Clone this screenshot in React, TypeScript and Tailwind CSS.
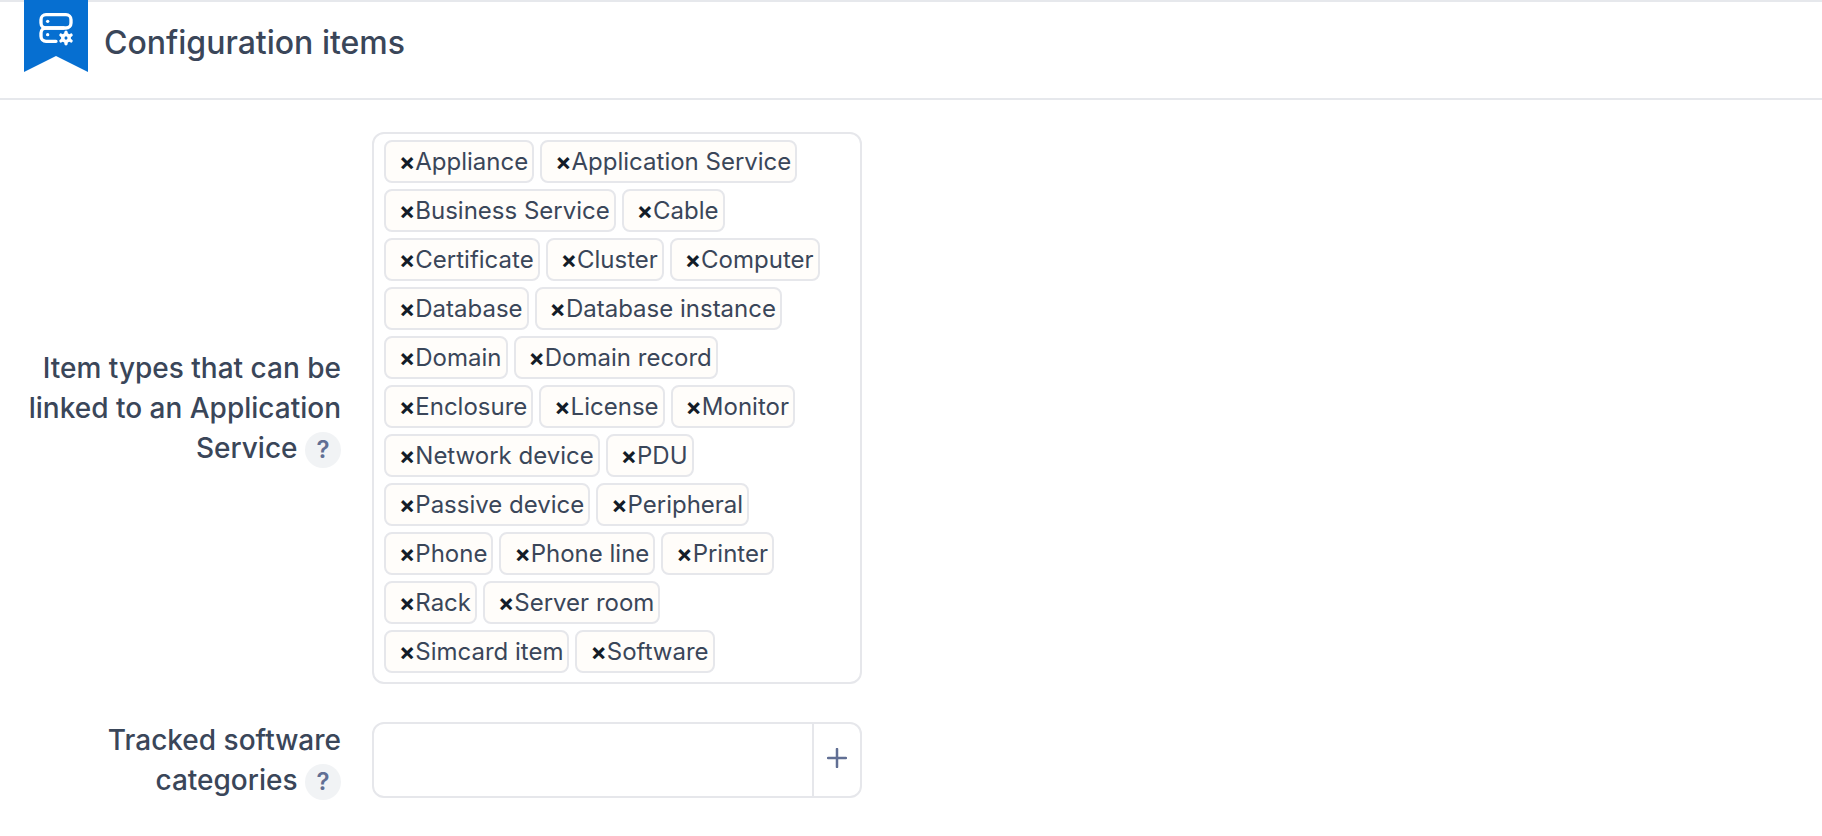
import { useState } from "react";
import type { ReactNode } from "react";
import { TbServerCog } from "react-icons/tb";

const initialTypes = [
  "Appliance",
  "Application Service",
  "Business Service",
  "Cable",
  "Certificate",
  "Cluster",
  "Computer",
  "Database",
  "Database instance",
  "Domain",
  "Domain record",
  "Enclosure",
  "License",
  "Monitor",
  "Network device",
  "PDU",
  "Passive device",
  "Peripheral",
  "Phone",
  "Phone line",
  "Printer",
  "Rack",
  "Server room",
  "Simcard item",
  "Software",
];

function FieldRow({ id, label, children }: { id: string; label: string; children: ReactNode }) {
  return (
    <div className="flex items-center">
      <div className="w-[372px] shrink-0 pl-6 pr-[31px] text-right text-[28px] leading-10 font-medium text-[#3a4659]">
        <label id={`${id}-label`} htmlFor={id}>
          {label}
        </label>{" "}
        <button
          type="button"
          aria-label={`Help: ${label}`}
          className="inline-flex size-9 items-center justify-center rounded-full bg-[#f1f3f5] align-middle text-2xl leading-6 font-semibold text-[#616f94]"
        >
          ?
        </button>
      </div>
      {children}
    </div>
  );
}

function Header() {
  return (
    <header className="flex h-[100px] items-start gap-4 border-y-2 border-[#e6e8ec] pl-6">
      <div className="-mt-0.5 flex h-[72px] w-16 justify-center bg-[#066fd1] pt-2 text-white [clip-path:polygon(0_0,100%_0,100%_100%,50%_56px,0_100%)]">
        <TbServerCog className="size-10" aria-hidden="true" />
      </div>
      <h1 className="py-5 text-[32px] leading-[42px] font-medium text-[#3a4659]">Configuration items</h1>
    </header>
  );
}

export default function App() {
  const [types, setTypes] = useState(initialTypes);

  return (
    <main className="bg-white font-['Inter',sans-serif]">
      <Header />
      <form className="flex flex-col gap-9 py-8">
        <FieldRow id="item-types" label="Item types that can be linked to an Application Service">
          <ul
            id="item-types"
            aria-labelledby="item-types-label"
            className="flex w-[490px] flex-wrap gap-1.5 rounded-xl border-2 border-[#e6e7eb] px-2.5 pt-1.5 pb-[9px]"
          >
            {types.map((type) => (
              <li
                key={type}
                className="flex h-[43px] items-center rounded-lg border-2 border-[#e6e7eb] bg-[#fffdfa] pr-1 pl-[13px] text-2xl text-[#3a4659]"
              >
                <button
                  type="button"
                  aria-label={`Remove ${type}`}
                  className="font-bold text-[#131c28]"
                  onClick={() => setTypes(types.filter((t) => t !== type))}
                >
                  ×
                </button>
                {type}
              </li>
            ))}
          </ul>
        </FieldRow>
        <FieldRow id="software-categories" label="Tracked software categories">
          <div className="flex h-[76px] w-[490px] rounded-xl border-2 border-[#e6e7eb]">
            <input id="software-categories" type="text" className="min-w-0 flex-1 px-3 text-2xl text-[#3a4659] outline-none" />
            <button
              type="button"
              aria-label="Add category"
              className="flex w-12 items-center justify-center border-l-2 border-[#e6e7eb] pb-1 text-[#616f94]"
            >
              <svg viewBox="0 0 20 20" className="size-5" fill="none" stroke="currentColor" strokeWidth="2.5" strokeLinecap="round" aria-hidden="true">
                <path d="M10 1v18M1 10h18" />
              </svg>
            </button>
          </div>
        </FieldRow>
      </form>
    </main>
  );
}
